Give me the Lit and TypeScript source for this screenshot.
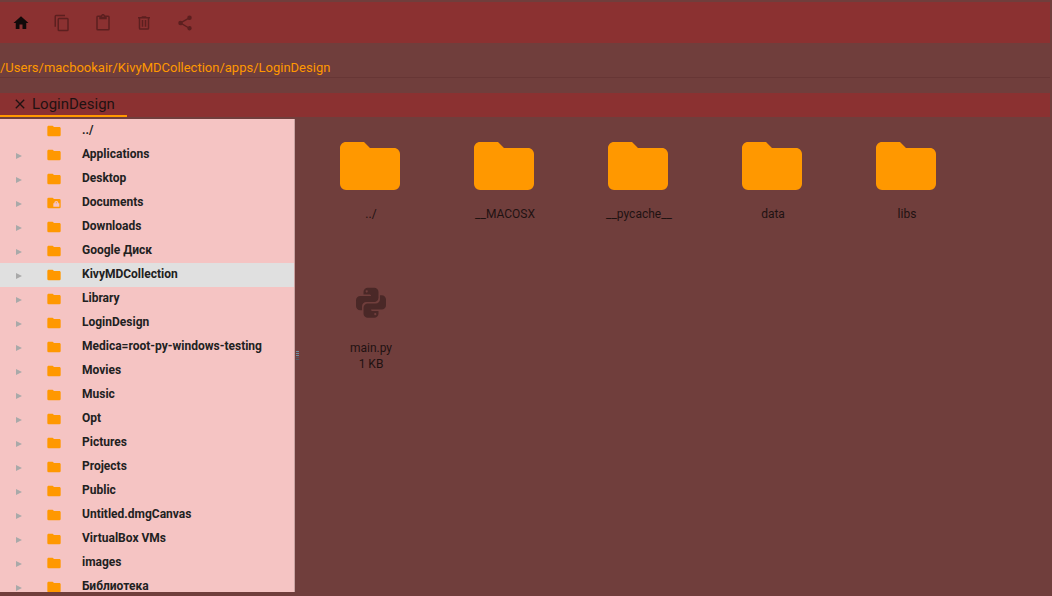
import { LitElement, html, css, svg } from "lit";
import { customElement, property, state } from "lit/decorators.js";
import { classMap } from "lit/directives/class-map.js";

const ICONS: Record<string, string> = {
  home: "M10,20V14H14V20H19V12H22L12,3L2,12H5V20H10Z",
  copy: "M19,21H8V7H19M19,5H8A2,2 0 0,0 6,7V21A2,2 0 0,0 8,23H19A2,2 0 0,0 21,21V7A2,2 0 0,0 19,5M16,1H4A2,2 0 0,0 2,3V17H4V3H16V1Z",
  paste:
    "M19,20H5V4H7V7H17V4H19M12,2A1,1 0 0,1 13,3A1,1 0 0,1 12,4A1,1 0 0,1 11,3A1,1 0 0,1 12,2M19,2H14.82C14.4,0.84 13.3,0 12,0C10.7,0 9.6,0.84 9.18,2H5A2,2 0 0,0 3,4V20A2,2 0 0,0 5,22H19A2,2 0 0,0 21,20V4A2,2 0 0,0 19,2Z",
  trash:
    "M9,3V4H4V6H5V19A2,2 0 0,0 7,21H17A2,2 0 0,0 19,19V6H20V4H15V3H9M7,6H17V19H7V6M9,8V17H11V8H9M13,8V17H15V8H13Z",
  share:
    "M18,16.08C17.24,16.08 16.56,16.38 16.04,16.85L8.91,12.7C8.96,12.47 9,12.24 9,12C9,11.76 8.96,11.53 8.91,11.3L15.96,7.19C16.5,7.69 17.21,8 18,8A3,3 0 0,0 21,5A3,3 0 0,0 18,2A3,3 0 0,0 15,5C15,5.24 15.04,5.47 15.09,5.7L8.04,9.81C7.5,9.31 6.79,9 6,9A3,3 0 0,0 3,12A3,3 0 0,0 6,15C6.79,15 7.5,14.69 8.04,14.19L15.16,18.34C15.11,18.55 15.08,18.77 15.08,19C15.08,20.61 16.39,21.91 18,21.91C19.61,21.91 20.92,20.6 20.92,19A2.92,2.92 0 0,0 18,16.08Z",
  close:
    "M19,6.41L17.59,5L12,10.59L6.41,5L5,6.41L10.59,12L5,17.59L6.41,19L12,13.41L17.59,19L19,17.59L13.41,12L19,6.41Z",
  folder:
    "M10,4H4C2.89,4 2,4.89 2,6V18A2,2 0 0,0 4,20H20A2,2 0 0,0 22,18V8C22,6.89 21.1,6 20,6H12L10,4Z",
  "folder-lock":
    "M20,6H12L10,4H4A2,2 0 0,0 2,6V18A2,2 0 0,0 4,20H20A2,2 0 0,0 22,18V8A2,2 0 0,0 20,6M20,17.5H11V12.5H12.5V12C12.5,10.4 13.8,9 15.5,9C17.2,9 18.5,10.4 18.5,12V12.5H20V17.5M15.5,11C14.9,11 14.5,11.4 14.5,12V12.5H16.5V12C16.5,11.4 16.1,11 15.5,11Z",
  python:
    "M19.14,7.5A2.86,2.86 0 0,1 22,10.36V14.14A2.86,2.86 0 0,1 19.14,17H12C12,17.39 12.32,17.96 12.71,17.96H17V19.64A2.86,2.86 0 0,1 14.14,22.5H9.86A2.86,2.86 0 0,1 7,19.64V15.89C7,14.31 8.28,13.04 9.86,13.04H15.11C16.69,13.04 17.96,11.76 17.96,10.18V7.5H19.14M14.86,19.29C14.46,19.29 14.14,19.41 14.14,20C14.14,20.59 14.46,20.89 14.86,20.89A0.71,0.71 0 0,0 15.57,20.18C15.57,19.59 15.25,19.29 14.86,19.29M4.86,17.5C3.28,17.5 2,16.22 2,14.64V10.86C2,9.28 3.28,8 4.86,8H12C12,7.61 11.68,7.04 11.29,7.04H7V5.36C7,3.78 8.28,2.5 9.86,2.5H14.14C15.72,2.5 17,3.78 17,5.36V9.11C17,10.69 15.72,11.96 14.14,11.96H8.89C7.31,11.96 6.04,13.24 6.04,14.82V17.5H4.86M9.14,5.71C9.54,5.71 9.86,5.41 9.86,4.82C9.86,4.23 9.54,4.11 9.14,4.11C8.75,4.11 8.43,4.23 8.43,4.82C8.43,5.41 8.75,5.71 9.14,5.71Z",
  arrow: "M0,0L24,12L0,24Z",
};

const ACTIONS = [
  { icon: "home", label: "Home", enabled: true },
  { icon: "copy", label: "Copy", enabled: false },
  { icon: "paste", label: "Paste", enabled: false },
  { icon: "trash", label: "Delete", enabled: false },
  { icon: "share", label: "Share", enabled: false },
];

const TREE = [
  "../",
  "Applications",
  "Desktop",
  "Documents",
  "Downloads",
  "Google Диск",
  "KivyMDCollection",
  "Library",
  "LoginDesign",
  "Medica=root-py-windows-testing",
  "Movies",
  "Music",
  "Opt",
  "Pictures",
  "Projects",
  "Public",
  "Untitled.dmgCanvas",
  "VirtualBox VMs",
  "images",
  "Библиотека",
];

const FILES = [
  { name: "../", icon: "folder", size: "" },
  { name: "__MACOSX", icon: "folder", size: "" },
  { name: "__pycache__", icon: "folder", size: "" },
  { name: "data", icon: "folder", size: "" },
  { name: "libs", icon: "folder", size: "" },
  { name: "main.py", icon: "python", size: "1 KB" },
];

@customElement("fm-icon")
class FmIcon extends LitElement {
  static styles = css`
    :host {
      display: block;
      flex: none;
      width: 18px;
      height: 18px;
    }
    .glyph {
      display: block;
      width: 100%;
      height: 100%;
      fill: currentColor;
    }
  `;

  @property() name = "";

  render() {
    return html`<svg class="glyph" viewBox="0 0 24 24" aria-hidden="true">
      ${svg`<path fill-rule="evenodd" d=${ICONS[this.name] ?? ""}></path>`}
    </svg>`;
  }
}

@customElement("app-root")
class AppRoot extends LitElement {
  static styles = css`
    :host {
      display: flex;
      flex-direction: column;
      box-sizing: border-box;
      height: 100vh;
      padding: 2px 0 4px;
      background: #703e3c;
      color: #1f1212;
      font-family: Roboto, "Noto Sans", sans-serif;
      font-size: 12px;
      line-height: 16px;
    }
    button,
    input {
      margin: 0;
      padding: 0;
      border: 0;
      background: none;
      color: inherit;
      font: inherit;
    }
    .toolbar {
      display: flex;
      align-items: center;
      flex: none;
      height: 41px;
      margin-right: 2px;
      background: #8b3131;
    }
    .action {
      display: grid;
      place-items: center;
      width: 41px;
      height: 41px;
      padding-left: 1px;
      color: #120a0a;
    }
    .action:disabled {
      color: #5c1f1f;
    }
    .path {
      flex: none;
      height: 20px;
      margin: 14px 2px 15px 0;
      border-bottom: 1px solid #673635;
      color: #ff9800;
      font-size: 13px;
      outline: none;
    }
    .tabs {
      display: flex;
      flex: none;
      height: 24px;
      margin-right: 2px;
      background: #8b3131;
    }
    .tab {
      display: flex;
      align-items: center;
      box-sizing: border-box;
      gap: 4px;
      padding: 0 12px;
      border-bottom: 2px solid #ff9800;
      font-size: 15px;
    }
    .close fm-icon {
      width: 16px;
      height: 16px;
    }
    .main {
      display: flex;
      flex: 1;
      min-height: 0;
      padding-top: 2px;
    }
    .tree {
      flex: none;
      box-sizing: border-box;
      width: 295px;
      margin: 0;
      padding: 0;
      overflow: hidden;
      list-style: none;
      border-right: 1px solid #c9a3a2;
      background: #f5c4c3;
    }
    .node {
      display: flex;
      align-items: center;
      width: 100%;
      height: 24px;
      padding-left: 16px;
      text-align: left;
      font-weight: 700;
      color: #212121;
    }
    .node.selected {
      background: #e0e0e0;
    }
    .twisty {
      width: 6px;
      height: 6px;
      margin: 2px 24px 0 0;
      color: #a9a9a9;
    }
    .leaf .twisty {
      visibility: hidden;
    }
    .node-icon {
      width: 16px;
      height: 16px;
      margin-right: 20px;
      color: #ff9800;
    }
    .node-name {
      padding-bottom: 2px;
    }
    .splitter {
      display: flex;
      flex: none;
      flex-direction: column;
      justify-content: center;
      gap: 1px;
      width: 5px;
      padding-left: 1px;
      box-sizing: border-box;
    }
    .grip {
      width: 3px;
      height: 1px;
      background: #6f8ea0;
    }
    .grip:nth-child(n + 4) {
      background: #4f5a68;
    }
    .files {
      display: grid;
      flex: 1;
      grid-template-columns: repeat(auto-fill, 134px);
      grid-auto-rows: 134px;
      align-content: start;
      margin: 0;
      padding: 11px 5px 0 4px;
      list-style: none;
    }
    .file {
      display: flex;
      flex-direction: column;
      align-items: center;
      width: 100%;
      text-align: center;
    }
    .thumb {
      display: grid;
      place-items: center;
      height: 76px;
    }
    .thumb fm-icon {
      width: 72px;
      height: 72px;
      margin: 0 2px 4px 0;
      color: #ff9800;
    }
    .thumb.small fm-icon {
      width: 36px;
      height: 36px;
      margin: 0;
      color: #4a2827;
    }
  `;

  @state() private selected = "KivyMDCollection";

  render() {
    return html`
      <header class="toolbar">
        ${ACTIONS.map(
          (a) => html`<button class="action" aria-label=${a.label} ?disabled=${!a.enabled}>
            <fm-icon name=${a.icon}></fm-icon>
          </button>`
        )}
      </header>
      <input class="path" aria-label="Path" spellcheck="false" .value=${"/Users/macbookair/KivyMDCollection/apps/LoginDesign"} />
      <nav class="tabs">
        <div class="tab">
          <button class="close" aria-label="Close tab"><fm-icon name="close"></fm-icon></button>
          <span>LoginDesign</span>
        </div>
      </nav>
      <div class="main">
        <ul class="tree">
          ${TREE.map(
            (name) => html`<li>
              <button
                class=${classMap({ node: true, selected: name === this.selected, leaf: name === "../" })}
                @click=${() => (this.selected = name)}
              >
                <fm-icon class="twisty" name="arrow"></fm-icon>
                <fm-icon class="node-icon" name=${name === "Documents" ? "folder-lock" : "folder"}></fm-icon>
                <span class="node-name">${name}</span>
              </button>
            </li>`
          )}
        </ul>
        <div class="splitter" role="separator" aria-orientation="vertical">
          ${[0, 1, 2, 3, 4].map(() => html`<span class="grip"></span>`)}
        </div>
        <ul class="files">
          ${FILES.map(
            (f) => html`<li>
              <button class="file">
                <span class=${classMap({ thumb: true, small: f.icon !== "folder" })}>
                  <fm-icon name=${f.icon}></fm-icon>
                </span>
                <span>${f.name}</span>
                ${f.size ? html`<span>${f.size}</span>` : ""}
              </button>
            </li>`
          )}
        </ul>
      </div>
    `;
  }
}
